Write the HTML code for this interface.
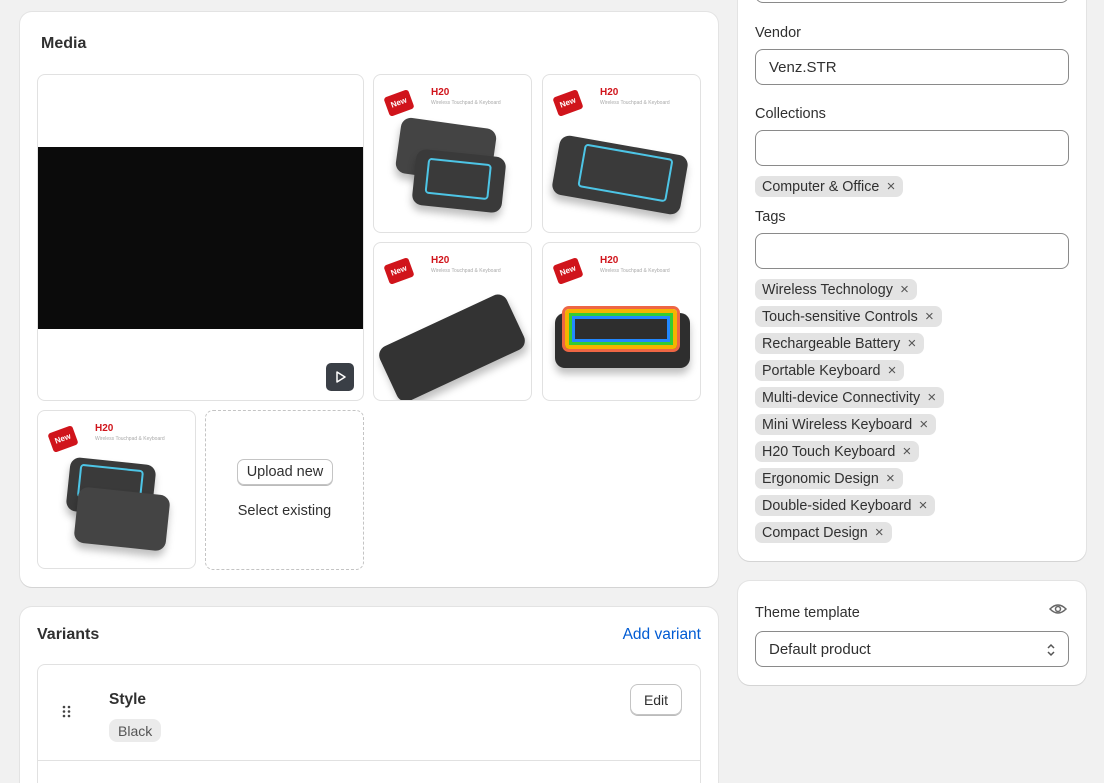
<!DOCTYPE html><html><head><style>
*{box-sizing:border-box;margin:0;padding:0}
html,body{width:1104px;height:783px;overflow:hidden}
body{background:#f1f1f1;font-family:"Liberation Sans",sans-serif;color:#303030;position:relative;font-size:14px}
.card{position:absolute;background:#fff;border-radius:12px;box-shadow:0 1px 0 #d4d4d4,0 0 0 1px #e3e3e3}
.a{position:absolute}
.thumb{position:absolute;border:1px solid #e1e1e1;border-radius:8px;background:#fff;overflow:hidden}
.new{position:absolute;left:12px;top:18px;width:26px;height:20px;background:#d0141b;border-radius:3px;transform:rotate(-20deg);color:#fff;font-size:8px;font-weight:bold;text-align:center;line-height:20px}
.h20{position:absolute;left:57px;top:12px;color:#d0141b;font-weight:bold;font-size:10px}
.sub{position:absolute;left:57px;top:25px;color:#aaa;font-size:5px}
.kb{position:absolute;background:#3a3a3a;border-radius:10px;box-shadow:0 6px 8px rgba(0,0,0,.25)}
.inp{position:absolute;left:17px;width:314px;height:36px;border:1px solid #8a8a8a;border-radius:8px;background:#fff}
.lbl{position:absolute;left:17px;font-size:14.5px}
.tag{position:absolute;left:17px;height:21px;background:#e3e3e3;border-radius:7px;padding:0 24px 0 7px;line-height:22px;font-size:14.3px;color:#303030}
.tag:after{content:"×";position:absolute;right:8px;top:0;color:#555;font-size:15px}
</style></head><body>
<div class="card" style="left:20px;top:12px;width:698px;height:575px">
<div class="a" style="left:21px;top:23px;font-weight:bold;font-size:16px">Media</div>
<div class="thumb" style="left:17px;top:62px;width:327px;height:327px">
<div class="a" style="left:0;top:72px;width:325px;height:182px;background:#0b0b0b"></div>
<div class="a" style="left:288px;top:288px;width:28px;height:28px;background:#3a3f46;border-radius:5px"><svg width="28" height="28"><path d="M11 9 L19 14 L11 19 Z" fill="none" stroke="#fff" stroke-width="1.5" stroke-linejoin="round"/></svg></div>
</div>
<div class="thumb" style="left:353px;top:62px;width:159px;height:159px"><div class="new">New</div><div class="h20">H20</div><div class="sub">Wireless Touchpad &amp; Keyboard</div><div class="kb" style="left:24px;top:48px;width:96px;height:56px;transform:rotate(8deg);background:#444"></div><div class="kb" style="left:40px;top:78px;width:90px;height:56px;transform:rotate(6deg)"><div class="a" style="left:12px;top:8px;width:64px;height:36px;border:2px solid #4dc5e6;border-radius:4px"></div></div></div>
<div class="thumb" style="left:522px;top:62px;width:159px;height:159px"><div class="new">New</div><div class="h20">H20</div><div class="sub">Wireless Touchpad &amp; Keyboard</div><div class="kb" style="left:12px;top:70px;width:130px;height:60px;transform:rotate(10deg)"><div class="a" style="left:25px;top:5px;width:90px;height:44px;border:2px solid #4dc5e6;border-radius:4px"></div></div></div>
<div class="thumb" style="left:353px;top:230px;width:159px;height:159px"><div class="new">New</div><div class="h20">H20</div><div class="sub">Wireless Touchpad &amp; Keyboard</div><div class="kb" style="left:8px;top:75px;width:140px;height:60px;transform:rotate(-25deg);background:#333"></div></div>
<div class="thumb" style="left:522px;top:230px;width:159px;height:159px"><div class="new">New</div><div class="h20">H20</div><div class="sub">Wireless Touchpad &amp; Keyboard</div><div class="kb" style="left:12px;top:70px;width:135px;height:55px;background:#2e2e2e"><div class="a" style="left:10px;top:-4px;width:112px;height:40px;border:4px solid #f5b400;border-radius:4px;box-shadow:0 0 0 3px #e64,inset 0 0 0 3px #3c3,inset 0 0 0 6px #28f"></div></div></div>
<div class="thumb" style="left:17px;top:398px;width:159px;height:159px"><div class="new">New</div><div class="h20">H20</div><div class="sub">Wireless Touchpad &amp; Keyboard</div><div class="kb" style="left:30px;top:50px;width:86px;height:54px;transform:rotate(6deg)"><div class="a" style="left:10px;top:6px;width:64px;height:34px;border:2px solid #4dc5e6;border-radius:4px"></div></div><div class="kb" style="left:38px;top:80px;width:92px;height:56px;transform:rotate(6deg);background:#444"></div></div>
<div class="a" style="left:185px;top:398px;width:159px;height:160px;border:1px dashed #c4c4c4;border-radius:8px">
<div class="a" style="left:31px;top:48px;width:96px;height:26px;border:1px solid #c4c4c4;border-radius:7px;box-shadow:0 1px 0 #bbb;text-align:center;line-height:25px;font-size:14.5px">Upload new</div>
<div class="a" style="left:0;width:157px;top:92px;text-align:center;font-size:14.5px">Select existing</div></div>
</div>
<div class="card" style="left:20px;top:607px;width:698px;height:176px;border-radius:12px 12px 0 0">
<div class="a" style="left:17px;top:19px;font-weight:bold;font-size:16px">Variants</div>
<div class="a" style="right:17px;top:19px;color:#005bd3;font-size:15.5px">Add variant</div>
<div class="a" style="left:17px;top:57px;width:664px;height:119px;border:1px solid #e1e1e1;border-bottom:none;border-radius:8px 8px 0 0">
<svg class="a" style="left:24px;top:40px" width="10" height="14"><g fill="#444"><circle cx="2" cy="2" r="1.3"/><circle cx="7" cy="2" r="1.3"/><circle cx="2" cy="6.5" r="1.3"/><circle cx="7" cy="6.5" r="1.3"/><circle cx="2" cy="11" r="1.3"/><circle cx="7" cy="11" r="1.3"/></g></svg>
<div class="a" style="left:71px;top:26px;font-weight:bold;font-size:15.5px">Style</div>
<div class="a" style="left:71px;top:54px;background:#ebebeb;border-radius:8px;padding:0 9px;height:23px;line-height:24px;color:#555">Black</div>
<div class="a" style="left:592px;top:19px;width:52px;height:31px;border:1px solid #c4c4c4;border-radius:8px;box-shadow:0 1px 0 #bbb;text-align:center;line-height:30px">Edit</div>
<div class="a" style="left:0;top:95px;width:662px;border-top:1px solid #e1e1e1"></div>
</div></div>
<div class="card" style="left:738px;top:-20px;width:348px;height:581px">
<div class="a" style="left:17px;top:0;width:314px;height:23px;border:1px solid #8a8a8a;border-radius:8px"></div>
<div class="lbl" style="top:45px">Vendor</div>
<div class="inp" style="top:69px;padding-left:13px;line-height:35px;font-size:15px">Venz.STR</div>
<div class="lbl" style="top:126px">Collections</div>
<div class="inp" style="top:150px"></div>
<div class="tag" style="top:196px">Computer &amp; Office</div>
<div class="lbl" style="top:229px">Tags</div>
<div class="inp" style="top:253px"></div>
<div class="tag" style="top:299px">Wireless Technology</div>
<div class="tag" style="top:326px">Touch-sensitive Controls</div>
<div class="tag" style="top:353px">Rechargeable Battery</div>
<div class="tag" style="top:380px">Portable Keyboard</div>
<div class="tag" style="top:407px">Multi-device Connectivity</div>
<div class="tag" style="top:434px">Mini Wireless Keyboard</div>
<div class="tag" style="top:461px">H20 Touch Keyboard</div>
<div class="tag" style="top:488px">Ergonomic Design</div>
<div class="tag" style="top:515px">Double-sided Keyboard</div>
<div class="tag" style="top:542px">Compact Design</div>
</div>
<div class="card" style="left:738px;top:581px;width:348px;height:104px">
<div class="lbl" style="top:24px">Theme template</div>
<svg class="a" style="left:310px;top:20px" width="20" height="16"><path d="M2 8 Q10 0 18 8 Q10 16 2 8Z" fill="none" stroke="#666" stroke-width="1.5"/><circle cx="10" cy="8" r="2.5" fill="none" stroke="#666" stroke-width="1.5"/></svg>
<div class="inp" style="top:50px;padding-left:13px;line-height:35px;font-size:15px">Default product
<svg class="a" style="right:12px;top:10px" width="10" height="16"><path d="M2 6 L5 3 L8 6 M2 10 L5 13 L8 10" fill="none" stroke="#555" stroke-width="1.5"/></svg></div>
</div>
</body></html>
